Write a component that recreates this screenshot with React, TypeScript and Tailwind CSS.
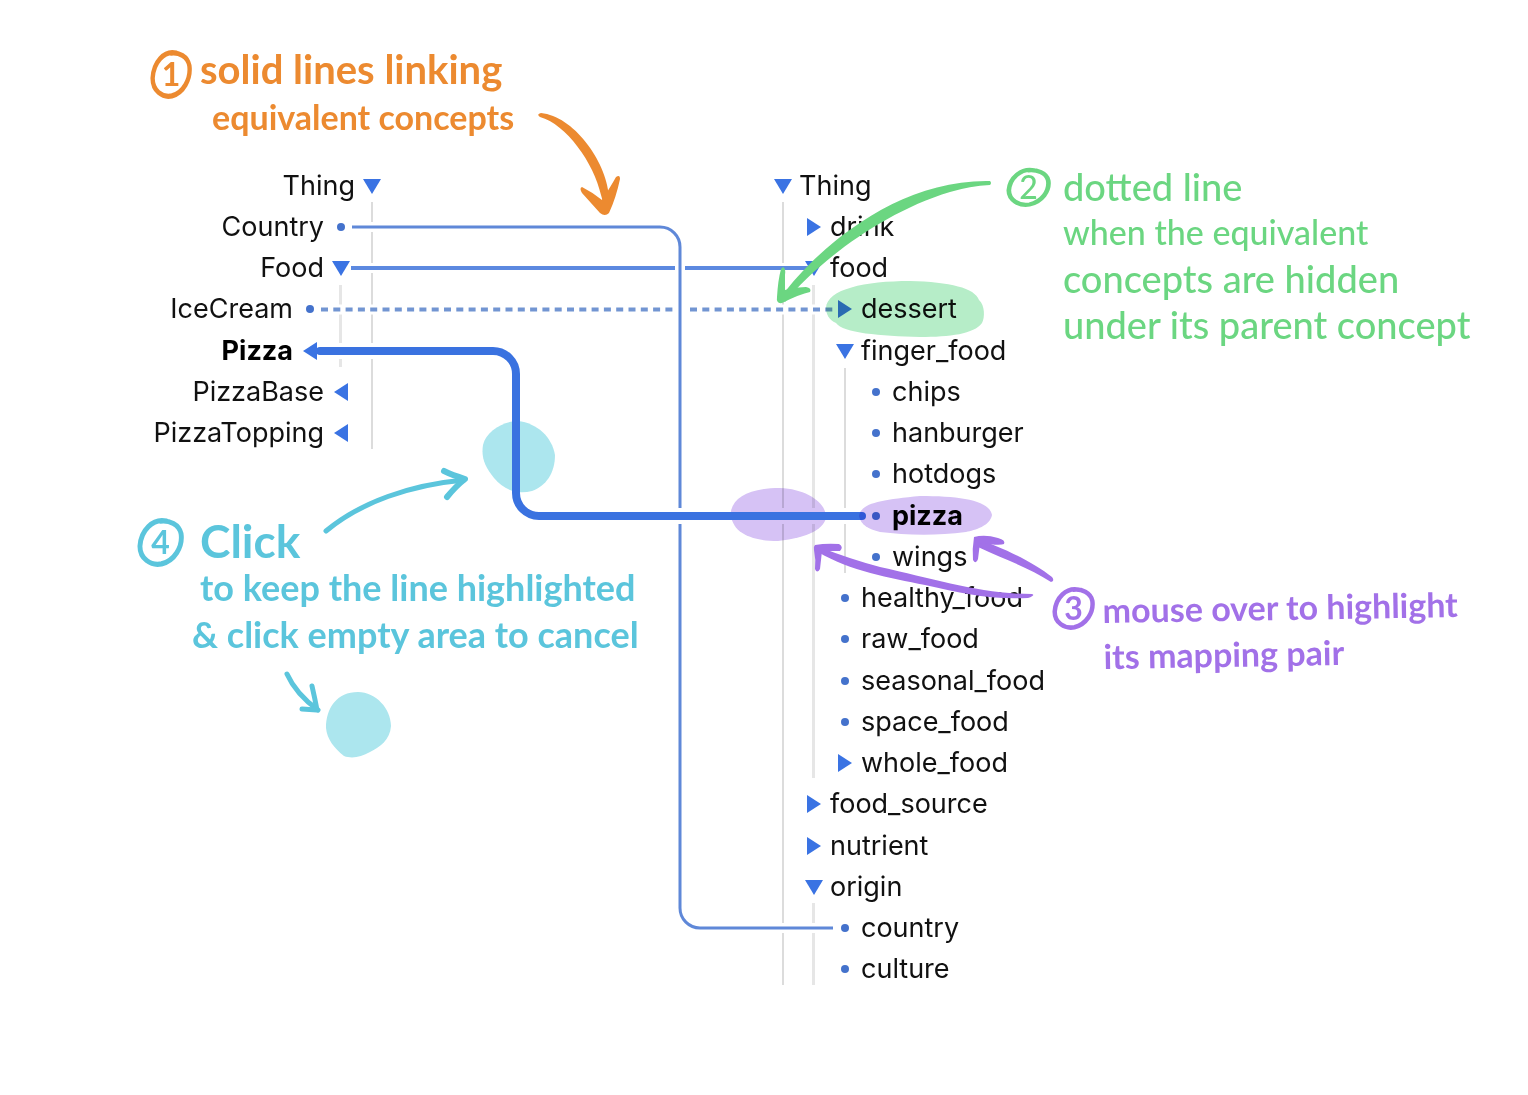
import React from "react";
import clsx from "clsx";

type Kind = "open" | "closed" | "leaf";
type Node = { name: string; level: 0 | 1 | 2 | 3; kind: Kind; bold?: boolean };

const source: Node[] = [
  { name: "Thing", level: 0, kind: "open" },
  { name: "Country", level: 1, kind: "leaf" },
  { name: "Food", level: 1, kind: "open" },
  { name: "IceCream", level: 2, kind: "leaf" },
  { name: "Pizza", level: 2, kind: "closed", bold: true },
  { name: "PizzaBase", level: 1, kind: "closed" },
  { name: "PizzaTopping", level: 1, kind: "closed" },
];

const target: Node[] = [
  { name: "Thing", level: 0, kind: "open" },
  { name: "drink", level: 1, kind: "closed" },
  { name: "food", level: 1, kind: "open" },
  { name: "dessert", level: 2, kind: "closed" },
  { name: "finger_food", level: 2, kind: "open" },
  { name: "chips", level: 3, kind: "leaf" },
  { name: "hanburger", level: 3, kind: "leaf" },
  { name: "hotdogs", level: 3, kind: "leaf" },
  { name: "pizza", level: 3, kind: "leaf", bold: true },
  { name: "wings", level: 3, kind: "leaf" },
  { name: "healthy_food", level: 2, kind: "leaf" },
  { name: "raw_food", level: 2, kind: "leaf" },
  { name: "seasonal_food", level: 2, kind: "leaf" },
  { name: "space_food", level: 2, kind: "leaf" },
  { name: "whole_food", level: 2, kind: "closed" },
  { name: "food_source", level: 1, kind: "closed" },
  { name: "nutrient", level: 1, kind: "closed" },
  { name: "origin", level: 1, kind: "open" },
  { name: "country", level: 2, kind: "leaf" },
  { name: "culture", level: 2, kind: "leaf" },
];

const leftIndent = ["pr-0", "pr-[31px]", "pr-[62px]", "pr-[93px]"];
const rightIndent = ["pl-0", "pl-[31px]", "pl-[62px]", "pl-[93px]"];

function Marker({ node, mirrored }: { node: Node; mirrored: boolean }) {
  if (node.kind === "leaf") {
    return (
      <span className="grid w-[31px] place-items-center">
        <span className="size-2 rounded-full bg-[#4472cc]" />
      </span>
    );
  }
  const shape =
    node.kind === "open" ? "M1 3H19L10 18Z" : mirrored ? "M17 1V19L3 10Z" : "M3 1V19L17 10Z";
  return (
    <button
      type="button"
      aria-label={`${node.kind === "open" ? "Collapse" : "Expand"} ${node.name}`}
      aria-expanded={node.kind === "open"}
      className="grid w-[31px] cursor-pointer place-items-center"
    >
      <svg viewBox="0 0 20 20" className="size-5 fill-[#3a73e3]">
        <path d={shape} />
      </svg>
    </button>
  );
}

function Tree({ nodes, mirrored = false, className }: { nodes: Node[]; mirrored?: boolean; className: string }) {
  return (
    <ul className={clsx("flex flex-col text-[27px] leading-8 text-[#111]", className)}>
      {nodes.map((n, i) => (
        <li
          key={i}
          className={clsx(
            "flex flex-1 items-center gap-px",
            mirrored ? "flex-row-reverse" : "",
            mirrored ? leftIndent[n.level] : rightIndent[n.level],
            n.bold && "font-bold text-black",
          )}
        >
          <Marker node={n} mirrored={mirrored} />
          <span>{n.name}</span>
        </li>
      ))}
    </ul>
  );
}

const COUNTRY = "M352 227H660a20 20 0 0 1 20 20V908a20 20 0 0 0 20 20H833";
const PIZZA = "M320 351H493a23 23 0 0 1 23 23V493a23 23 0 0 0 23 23H862";

function Connectors() {
  return (
    <svg className="pointer-events-none absolute top-0 left-0" width="1528" height="1095" fill="none" aria-hidden="true">
      <g fill="#ace6ee">
        <path d="M518 421C537 423 552 437 555 455C555 473 546 486 532 491C516 495 503 489 494 478C485 467 481 458 483 445C486 431 504 421 518 421Z" />
        <path d="M358 692C376 692 391 709 391 726C390 740 380 747 370 752C361 757 352 759 344 756C334 748 327 739 326 728C326 708 337 692 358 692Z" />
      </g>
      <g stroke="#dcdcdc" strokeWidth="2">
        <path d="M372 202V449M783 202V985M845 368V573" />
        <path stroke="#e6e6e6" strokeWidth="3" d="M340.500 285V367M813.500 285V778M813.500 903V985" />
      </g>
      <path stroke="#fff" strokeWidth="10" d="M352 268H807M320 309.500H836" />
      <path stroke="#5c89e0" strokeWidth="4" d="M351 268H808" />
      <path stroke="#7295d2" strokeWidth="4" strokeDasharray="7 5.300" d="M321 309.500H836" />
      <path stroke="#fff" strokeWidth="10" d={COUNTRY} />
      <path stroke="#5f88d8" strokeWidth="3" d={COUNTRY} />
      <path stroke="#fff" strokeWidth="16" d="M330 351H480M540 516H858" />
      <path
        className="mix-blend-multiply"
        fill="#d6c2f5"
        d="M731 511C734 496 752 488 780 488C806 489 825 502 826 516C826 528 808 538 778 541C748 541 730 531 731 511Z"
      />
      <path stroke="#3a72e0" strokeWidth="8" strokeLinecap="round" d={PIZZA} />
    </svg>
  );
}

function Highlights() {
  return (
    <svg className="pointer-events-none absolute top-0 left-0 mix-blend-multiply" width="1528" height="1095" aria-hidden="true">
      <path
        fill="#b6edc8"
        d="M826 308C827 289 865 281 910 281C950 282 975 288 979 300C985 305 985 318 982 323C974 334 950 337 920 337C880 336 843 333 836 323C829 320 826 314 826 308Z"
      />
      <path
        fill="#d6c2f5"
        d="M859 516C861 503 880 500 920 496C960 496 989 500 992 515C990 526 975 530 966 532C935 536 905 535 880 532C868 529 861 525 859 516Z"
      />
    </svg>
  );
}

function Arrows() {
  return (
    <svg
      className="pointer-events-none absolute top-0 left-0"
      width="1528"
      height="1095"
      fill="none"
      strokeLinecap="round"
      strokeLinejoin="round"
      aria-hidden="true"
    >
      <g fill="#ec8a30">
        <path d="M541 113C573 116 606 160 609 196L606 213L601 195C594 163 566 124 540 117Q536 114 541 113Z" />
        <path d="M582 187Q592 192 602 200Q611 186 616 177Q620 174 620 179Q616 198 609 213Q605 217 600 213L582 193Q579 188 582 187Z" />
      </g>
      <g fill="#6bd681">
        <path d="M990 181C895 179 815 251 781 297L785 302C815 265 880 213 950 192Q970 186 990 185Q992 183 990 181Z" />
        <path d="M783 267Q786 268 785 275L785 290Q795 287 806 287Q812 288 810 292Q800 294 782 303Q776 304 777 297Q778 280 781 269Z" />
      </g>
      <g stroke="#5bc5dc" strokeWidth="5">
        <path d="M326 531C361 502 410 485 464 480" />
        <path strokeWidth="6" d="M444 471Q452 475 465 479Q456 486 447 497" />
        <path d="M287 674Q296 694 318 710" />
        <path d="M302 709L317 710Q315 699 312 686" />
      </g>
      <g fill="#a271e8">
        <path d="M1051 582C1030 568 1008 561 978 547L976 539C1000 546 1033 562 1052 577Q1055 581 1051 582Z" />
        <path d="M974 537Q985 534 998 538Q1006 540 1004 544Q1000 546 980 543L978 559Q976 565 973 560Q972 549 974 537Z" />
        <path d="M1032 594C980 594 935 579 880 567Q850 559 822 548L818 552C850 571 890 578 925 585C960 593 990 600 1028 598Q1036 595 1032 594Z" />
        <path d="M815 545Q826 543 839 544Q844 547 840 551Q831 551 822 551L820 569Q817 574 815 569Q816 560 814 550Q813 547 815 545Z" />
      </g>
    </svg>
  );
}

function Step({ n, ring, className }: { n: number; ring: string; className: string }) {
  return (
    <span className={clsx("relative grid shrink-0 place-items-center text-[32px] leading-none", className)}>
      <svg viewBox="0 0 48 48" preserveAspectRatio="none" className="absolute inset-0 size-full" fill="none" stroke="currentColor" strokeWidth="5" strokeLinecap="round" aria-hidden="true">
        <path d={ring} />
      </svg>
      <span>{n}</span>
    </span>
  );
}

const RING = "M30 4C16 1 4 13 3 28C3 40 14 47 25 45C38 42 47 29 45 16C43 7 33 3 24 4";

export default function App() {
  return (
    <main className="relative min-h-screen w-full overflow-hidden bg-white pt-[165px] pb-[105px] font-[Inter,sans-serif]">
      <Connectors />
      <div className="relative flex items-start gap-[380px]">
        <Tree nodes={source} mirrored className="h-[289px] w-[387px]" />
        <Tree nodes={target} className="h-[825px]" />
      </div>
      <Highlights />
      <Arrows />

      <section className="absolute top-[45px] left-[150px] flex gap-2 font-[Lato,sans-serif] font-bold whitespace-nowrap text-[#ec8a30]">
        <Step n={1} ring={RING} className="mt-1 h-[50px] w-[42px]" />
        <p className="leading-[48px]">
          <span className="block text-[40px]">solid lines linking</span>
          <span className="block pl-3 text-[34px]">equivalent concepts</span>
        </p>
      </section>

      <section className="absolute top-[163px] left-[1006px] flex gap-3 font-[Lato,sans-serif] font-medium whitespace-nowrap text-[#6bd681]">
        <Step n={2} ring={RING} className="mt-1 h-[40px] w-[45px]" />
        <p className="leading-[46px]">
          <span className="block text-[38px]">dotted line</span>
          <span className="block text-[34px]">when the equivalent</span>
          <span className="block text-[38px]">concepts are hidden</span>
          <span className="block text-[38px]">under its parent concept</span>
        </p>
      </section>

      <section className="absolute top-[584px] left-[1052px] flex gap-2 font-[Lato,sans-serif] font-bold whitespace-nowrap text-[#a271e8]">
        <Step n={3} ring={RING} className="mt-[2px] h-[44px] w-[43px]" />
        <p className="-rotate-1 leading-[46px]">
          <span className="block text-[34px]">mouse over to highlight</span>
          <span className="block text-[34px]">its mapping pair</span>
        </p>
      </section>

      <section className="absolute top-[517px] left-[137px] flex gap-2 font-[Lato,sans-serif] font-bold whitespace-nowrap text-[#5bc5dc]">
        <Step n={4} ring={RING} className="h-[50px] w-[47px]" />
        <p className="leading-[47px]">
          <span className="block pl-2 text-[46px]">Click</span>
          <span className="block pl-2 text-[36px]">to keep the line highlighted</span>
          <span className="block text-[36px]">&amp; click empty area to cancel</span>
        </p>
      </section>
    </main>
  );
}
